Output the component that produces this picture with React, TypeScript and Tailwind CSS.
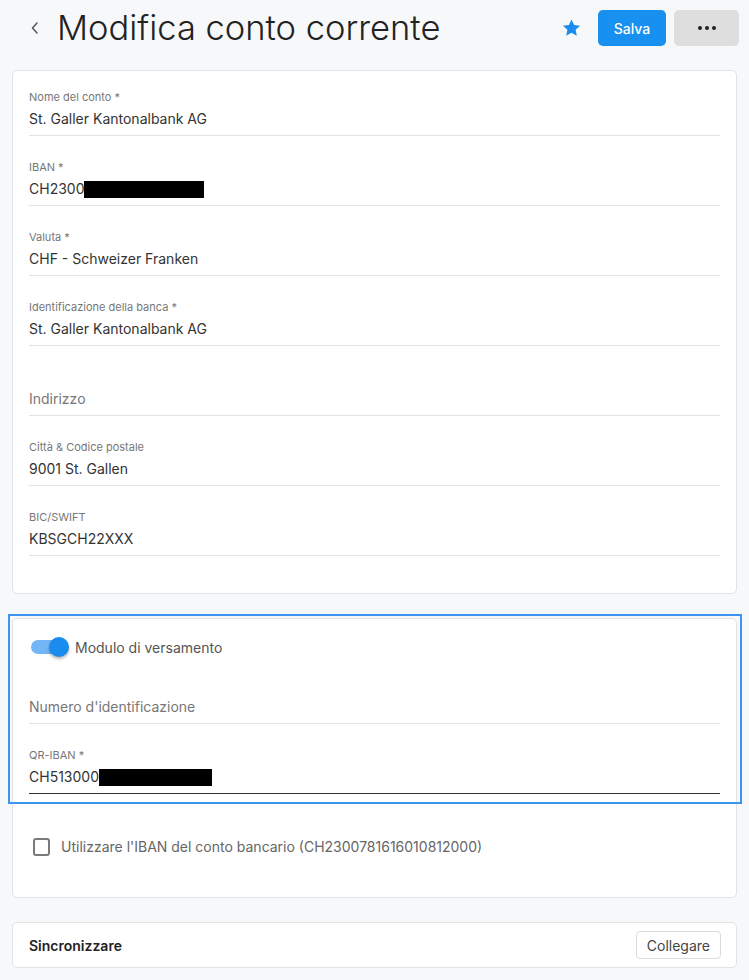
import { useState } from 'react'

interface FieldProps {
  label?: string
  value?: string
  placeholder?: string
  redact?: number
  active?: boolean
  first?: boolean
}

function Field({ label, value, placeholder, redact, active, first }: FieldProps) {
  return (
    <div
      className={`${first ? '' : 'mt-[24px]'} pb-[6px] border-b ${
        active ? 'border-[#333333]' : 'border-[#e2e2e2]'
      }`}
    >
      <div className="h-[14px] text-[11px] leading-[14px] text-[#777777]">{label}</div>
      <div className="mt-[5px] h-[20px] flex items-center text-[14px] leading-[20px]">
        {value ? (
          <span className="text-[#333333]">{value}</span>
        ) : (
          <span className="text-[#777777]">{placeholder}</span>
        )}
        {redact ? <span className="inline-block h-[17px] bg-black" style={{ width: redact }} /> : null}
      </div>
    </div>
  )
}

export default function App() {
  const [enabled, setEnabled] = useState(true)
  const [useIban, setUseIban] = useState(false)

  return (
    <div
      className="min-h-[980px] bg-[#f7f8f9] px-[12px] pb-[12px]"
      style={{ fontFamily: 'Inter, "Noto Sans", sans-serif' }}
    >
      {/* header */}
      <div className="h-[70px] flex items-center">
        <button className="ml-[13px] -mt-[14px] w-[20px] h-[20px] flex items-center justify-center text-[#555555]">
          <svg width="12" height="14" viewBox="0 0 12 14" fill="none">
            <path d="M8 2 L3.5 7 L8 12" stroke="currentColor" strokeWidth="1.5" strokeLinecap="round" strokeLinejoin="round" />
          </svg>
        </button>
        <h1 className="ml-[12px] -mt-[14px] text-[34.5px] leading-[40px] font-light text-[#222222]">
          Modifica conto corrente
        </h1>
        <div className="ml-auto -mr-[2px] -mt-[14px] flex items-center">
          <svg width="21" height="20" viewBox="0 0 24 24" className="mr-[16px]">
            <path
              d="M12 1.8l3.1 6.6 7.2.8-5.4 4.9 1.5 7.1L12 17.6l-6.4 3.6 1.5-7.1-5.4-4.9 7.2-.8z"
              fill="#1a8cf0"
            />
          </svg>
          <button className="w-[68px] h-[36px] rounded-[5px] bg-[#1890f0] text-white text-[14px] font-medium">
            Salva
          </button>
          <button className="ml-[8px] w-[65px] h-[36px] rounded-[5px] bg-[#dedede] flex items-center justify-center gap-[3px]">
            <span className="w-[4px] h-[4px] rounded-full bg-[#222222]" />
            <span className="w-[4px] h-[4px] rounded-full bg-[#222222]" />
            <span className="w-[4px] h-[4px] rounded-full bg-[#222222]" />
          </button>
        </div>
      </div>

      {/* account details */}
      <div className="bg-white border border-[#e2e2e2] rounded-[5px] px-[16px] pt-[19px] pb-[37px]">
        <Field first label="Nome del conto *" value="St. Galler Kantonalbank AG" />
        <Field label="IBAN *" value="CH2300" redact={120} />
        <Field label="Valuta *" value="CHF - Schweizer Franken" />
        <Field label="Identificazione della banca *" value="St. Galler Kantonalbank AG" />
        <Field placeholder="Indirizzo" />
        <Field label="Città & Codice postale" value="9001 St. Gallen" />
        <Field label="BIC/SWIFT" value="KBSGCH22XXX" />
      </div>

      {/* payment slip */}
      <div className="relative mt-[24px] bg-white border border-[#e2e2e2] rounded-[5px] px-[16px] pt-[9px] pb-[40px]">
        <div className="h-[38px] flex items-center">
          <button
            onClick={() => setEnabled(!enabled)}
            className="relative ml-[2px] w-[38px] h-[20px] flex items-center"
          >
            <span className={`w-[34px] h-[14px] rounded-full ${enabled ? 'bg-[#72b6f7]' : 'bg-[#bbbbbb]'}`} />
            <span
              className={`absolute top-0 w-[20px] h-[20px] rounded-full shadow-[0_2px_3px_rgba(0,0,0,0.3)] ${
                enabled ? 'left-[18px] bg-[#1a8cf0]' : 'left-0 bg-white'
              }`}
            />
          </button>
          <span className="ml-[6px] text-[14px] text-[#555555]">Modulo di versamento</span>
        </div>
        <div className="mt-[12px]">
          <Field first placeholder="Numero d'identificazione" />
          <Field label="QR-IBAN *" value="CH513000" redact={113} active />
        </div>
        <label className="mt-[42px] flex items-center cursor-pointer">
          <span
            onClick={() => setUseIban(!useIban)}
            className={`ml-[4px] w-[17px] h-[18px] rounded-[3px] border-2 ${
              useIban ? 'border-[#1a8cf0] bg-[#1a8cf0]' : 'border-[#7a7a7a]'
            }`}
          />
          <span className="ml-[11px] text-[14px] text-[#666666]">
            Utilizzare l'IBAN del conto bancario (CH2300781616010812000)
          </span>
        </label>
        <div className="pointer-events-none absolute -left-[5px] -right-[6px] -top-[5px] h-[190px] border-2 border-[#3d95f2]" />
      </div>

      {/* sync */}
      <div className="mt-[24px] h-[46px] bg-white border border-[#e2e2e2] rounded-[5px] pl-[16px] pr-[15px] flex items-center justify-between">
        <span className="text-[14px] font-semibold text-[#222222]">Sincronizzare</span>
        <button className="h-[28px] px-[10px] rounded-[4px] border border-[#dcdcdc] bg-white text-[14px] text-[#444444]">
          Collegare
        </button>
      </div>
    </div>
  )
}
